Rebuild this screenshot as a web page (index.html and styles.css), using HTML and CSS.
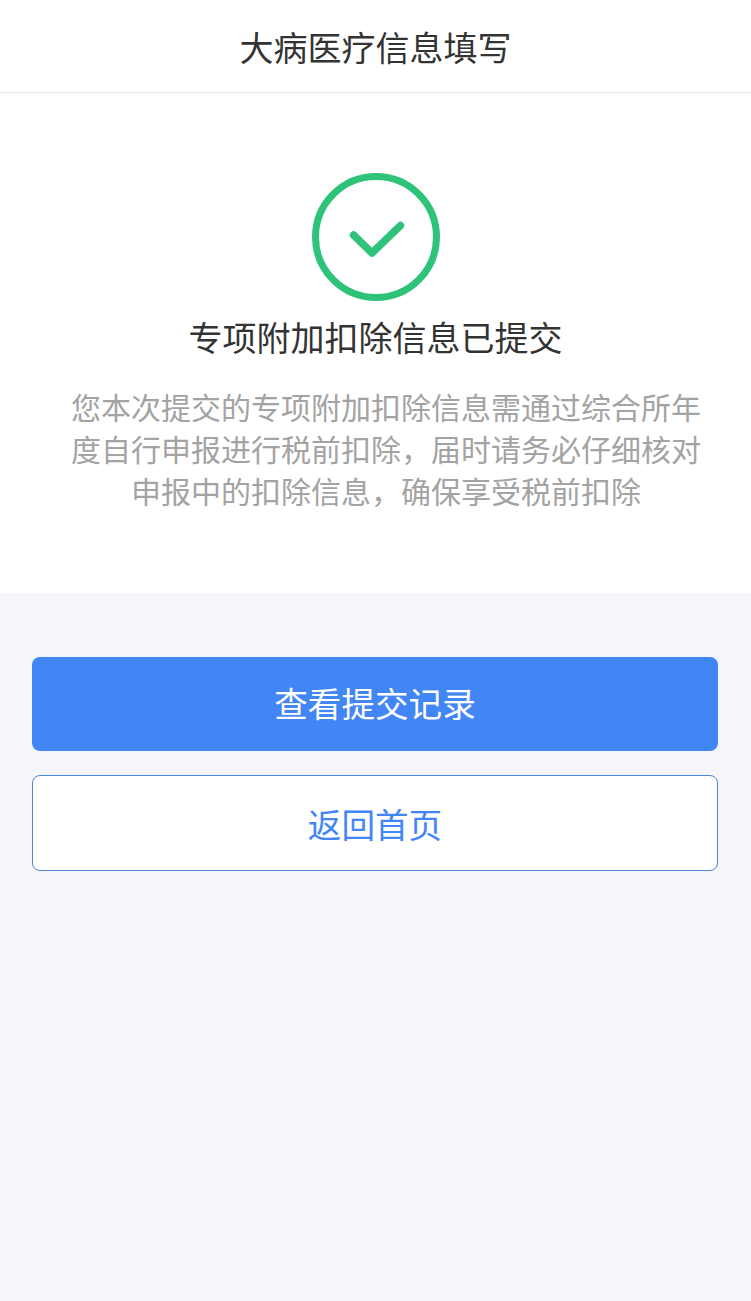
FILE: index.html
```html
<!DOCTYPE html>
<html lang="zh-CN">
<head>
    <meta charset="UTF-8">
    <meta name="viewport" content="width=device-width, initial-scale=1.0">
    <title>大病医疗信息填写</title>
    <link rel="stylesheet" href="styles.css">
</head>
<body>
<header class="nav-bar">大病医疗信息填写</header>
<section class="result">
    <svg class="result-icon" width="128" height="128" viewBox="0 0 128 128">
        <circle cx="64" cy="64" r="60.5" fill="none" stroke="#2fc27a" stroke-width="7"/>
        <path d="M41.5 62 L60 80 L88.5 52.5" fill="none" stroke="#2fc27a" stroke-width="7.5" stroke-linecap="round" stroke-linejoin="round"/>
    </svg>
    <h2 class="result-title">专项附加扣除信息已提交</h2>
    <p class="result-desc">您本次提交的专项附加扣除信息需通过综合所年度自行申报进行税前扣除，届时请务必仔细核对申报中的扣除信息，确保享受税前扣除</p>
</section>
<section class="actions">
    <button class="btn btn-primary">查看提交记录</button>
    <button class="btn btn-outline">返回首页</button>
</section>
</body>
</html>
```

FILE: styles.css
```css
body, html {
    margin: 0;
    padding: 0;
    height: 100%;
    overflow: hidden;
    font-family: "Noto Sans CJK SC", "Liberation Sans", sans-serif;
    background-color: #f4f6fa;
}
.nav-bar {
    height: 92px;
    line-height: 94px;
    background-color: #ffffff;
    border-bottom: 1px solid #e6e6e6;
    text-align: center;
    font-size: 34px;
    color: #333;
}
.result {
    height: 500px;
    box-sizing: border-box;
    padding-top: 80px;
    background-color: #ffffff;
    text-align: center;
}
.result-icon {
    display: block;
    margin: 0 auto;
}
.result-title {
    margin: 13px 0 0;
    font-size: 34px;
    font-weight: normal;
    line-height: 46px;
    color: #333;
}
.result-desc {
    margin: 25px 0 0;
    padding: 0 50px 0 71px;
    font-size: 30px;
    line-height: 42px;
    color: #a3a3a3;
}
.actions {
    display: flex;
    flex-direction: column;
    gap: 24px;
    padding: 64px 33px 0 32px;
}
.btn {
    display: block;
    width: 100%;
    box-sizing: border-box;
    border-radius: 8px;
    font-family: inherit;
    font-size: 33.6px;
}
.btn-primary {
    height: 94px;
    padding-bottom: 4px;
    background-color: #4285f4;
    border: none;
    color: #ffffff;
}
.btn-outline {
    height: 96px;
    background-color: #ffffff;
    border: 1px solid #4a86dc;
    color: #4285f4;
}
```
